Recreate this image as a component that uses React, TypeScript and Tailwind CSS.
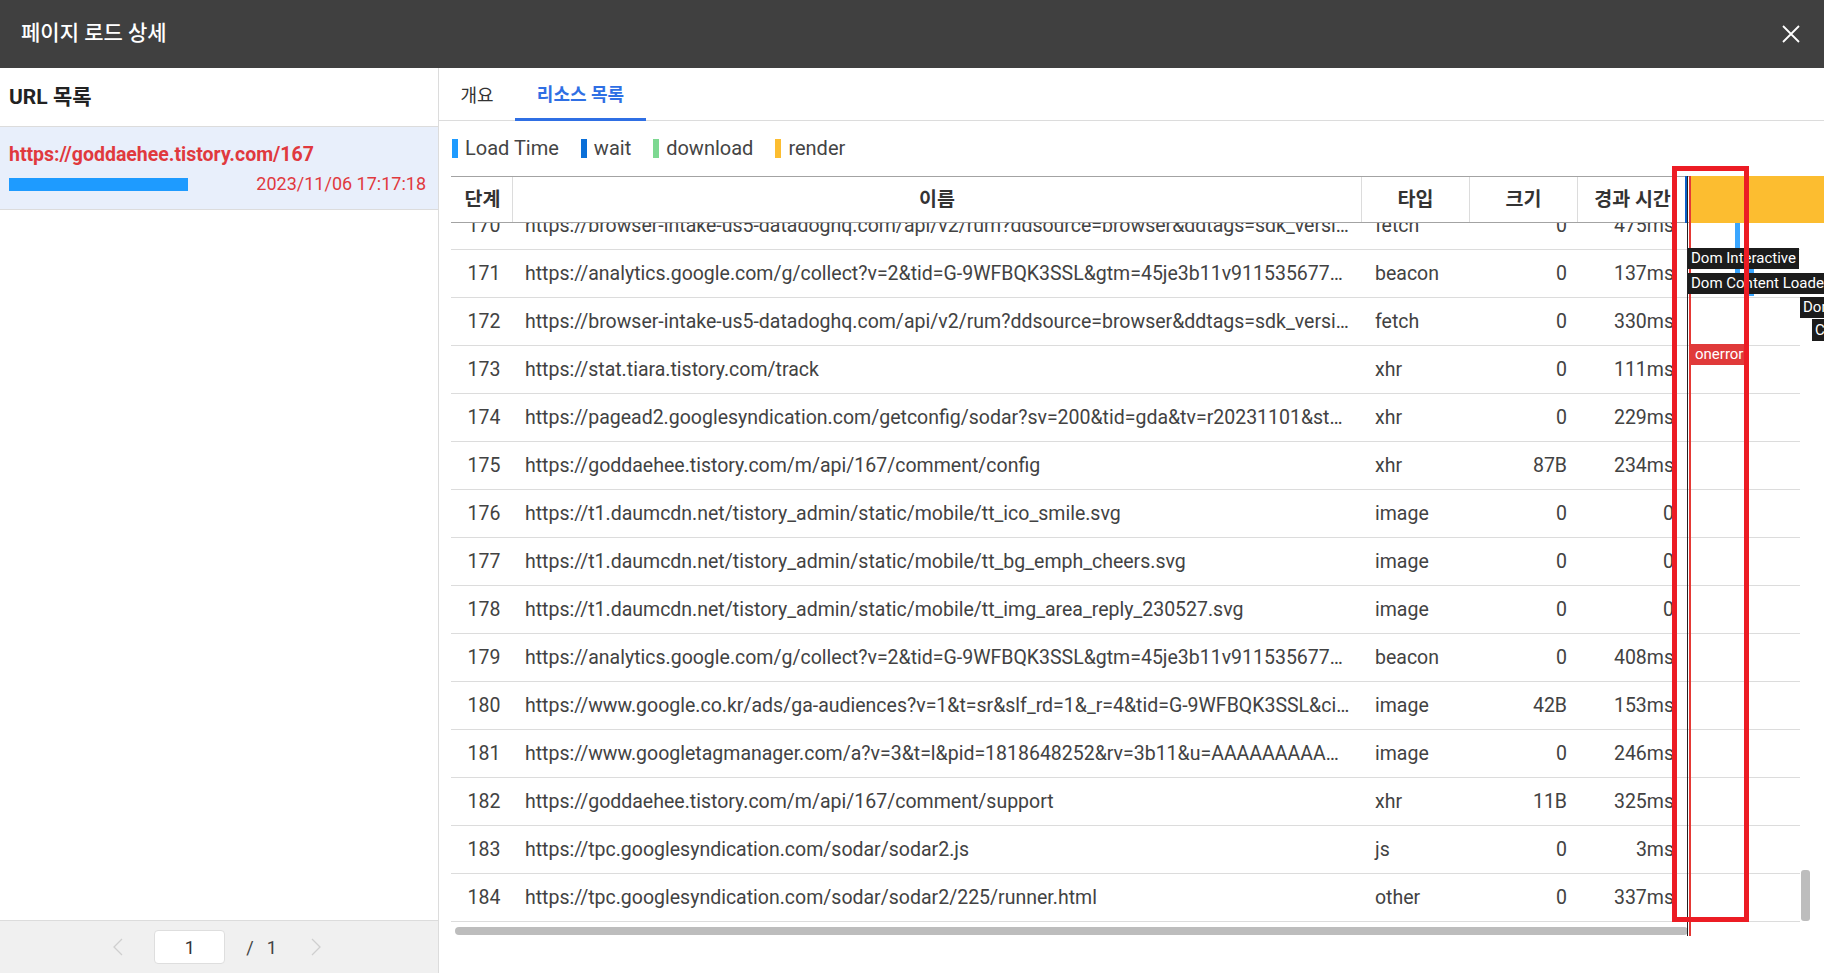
import React from "react";

const rows: [string, string, string, string, string][] = [
  ["170", "https://browser-intake-us5-datadoghq.com/api/v2/rum?ddsource=browser&ddtags=sdk_versi…", "fetch", "0", "475ms"],
  ["171", "https://analytics.google.com/g/collect?v=2&tid=G-9WFBQK3SSL&gtm=45je3b11v911535677…", "beacon", "0", "137ms"],
  ["172", "https://browser-intake-us5-datadoghq.com/api/v2/rum?ddsource=browser&ddtags=sdk_versi…", "fetch", "0", "330ms"],
  ["173", "https://stat.tiara.tistory.com/track", "xhr", "0", "111ms"],
  ["174", "https://pagead2.googlesyndication.com/getconfig/sodar?sv=200&tid=gda&tv=r20231101&st…", "xhr", "0", "229ms"],
  ["175", "https://goddaehee.tistory.com/m/api/167/comment/config", "xhr", "87B", "234ms"],
  ["176", "https://t1.daumcdn.net/tistory_admin/static/mobile/tt_ico_smile.svg", "image", "0", "0"],
  ["177", "https://t1.daumcdn.net/tistory_admin/static/mobile/tt_bg_emph_cheers.svg", "image", "0", "0"],
  ["178", "https://t1.daumcdn.net/tistory_admin/static/mobile/tt_img_area_reply_230527.svg", "image", "0", "0"],
  ["179", "https://analytics.google.com/g/collect?v=2&tid=G-9WFBQK3SSL&gtm=45je3b11v911535677…", "beacon", "0", "408ms"],
  ["180", "https://www.google.co.kr/ads/ga-audiences?v=1&t=sr&slf_rd=1&_r=4&tid=G-9WFBQK3SSL&ci…", "image", "42B", "153ms"],
  ["181", "https://www.googletagmanager.com/a?v=3&t=l&pid=1818648252&rv=3b11&u=AAAAAAAAA…", "image", "0", "246ms"],
  ["182", "https://goddaehee.tistory.com/m/api/167/comment/support", "xhr", "11B", "325ms"],
  ["183", "https://tpc.googlesyndication.com/sodar/sodar2.js", "js", "0", "3ms"],
  ["184", "https://tpc.googlesyndication.com/sodar/sodar2/225/runner.html", "other", "0", "337ms"],
];

const legend = [
  { label: "Load Time", color: "bg-[#1e9bff]" },
  { label: "wait", color: "bg-[#0a6fd8]" },
  { label: "download", color: "bg-[#7dd891]" },
  { label: "render", color: "bg-[#fcbd30]" },
];

const cols = "grid grid-cols-[62px_849px_108px_108px_109px_113px]";

export default function App() {
  return (
    <div className="w-full h-[973px] overflow-hidden flex flex-col bg-white font-[Roboto,'Noto_Sans_CJK_KR',sans-serif] text-[#424242]">
      {/* Title bar */}
      <div className="h-[68px] shrink-0 bg-[#404040] flex items-center justify-between pl-[21px] pr-[24px]">
        <div className="text-white text-[21px] font-medium">페이지 로드 상세</div>
        <svg width="18" height="18" viewBox="0 0 18 18" className="text-white">
          <path d="M1 1L17 17M17 1L1 17" stroke="currentColor" strokeWidth="1.8" />
        </svg>
      </div>

      <div className="flex-1 flex min-h-0">
        {/* Left panel */}
        <aside className="w-[439px] shrink-0 border-r border-[#dcdcdc] flex flex-col">
          <div className="h-[59px] shrink-0 border-b border-[#dcdcdc] flex items-center pl-[9px] pt-[2px] text-[21px] font-bold text-[#222]">
            URL 목록
          </div>
          <div className="h-[83px] shrink-0 bg-[#e8effb] border-b border-[#dcdcdc] pl-[9px] pr-[12px] pt-[16px] flex flex-col">
            <div className="text-[19.5px] font-bold text-[#e0393e] leading-[24px]">https://goddaehee.tistory.com/167</div>
            <div className="mt-[6px] flex items-center justify-between">
              <div className="w-[179px] h-[13px] bg-[#1e9bff]" />
              <div className="text-[18px] text-[#e0393e] leading-[22px]">2023/11/06 17:17:18</div>
            </div>
          </div>
          <div className="flex-1" />
          <div className="h-[53px] shrink-0 border-t border-[#dcdcdc] bg-[#f0f0f0] flex items-center justify-center pr-[4px]">
            <svg width="12" height="20" viewBox="0 0 12 20" className="text-[#cfcfcf]">
              <path d="M10 2L2 10L10 18" fill="none" stroke="currentColor" strokeWidth="1.3" />
            </svg>
            <div className="ml-[30px] w-[71px] h-[34px] bg-white border border-[#dedede] rounded-[4px] flex items-center justify-center text-[18px] text-[#333]">
              1
            </div>
            <div className="ml-[21px] text-[18px] text-[#444] flex gap-[13px]">
              <span>/</span>
              <span>1</span>
            </div>
            <svg width="12" height="20" viewBox="0 0 12 20" className="ml-[33px] text-[#cfcfcf]">
              <path d="M2 2L10 10L2 18" fill="none" stroke="currentColor" strokeWidth="1.3" />
            </svg>
          </div>
        </aside>

        {/* Right panel */}
        <main className="flex-1 min-w-0 flex flex-col">
          <div className="h-[53px] shrink-0 border-b border-[#dcdcdc] flex items-stretch">
            <div className="w-[76px] pt-[3px] flex items-center justify-center text-[18px] text-[#333]">개요</div>
            <div className="w-[131px] pt-[3px] flex items-center justify-center text-[18px] font-bold text-[#2f6fe4] border-b-[3px] border-[#2f6fe4] mb-[-1px]">
              리소스 목록
            </div>
          </div>

          <div className="h-[54px] shrink-0 flex items-center pl-[13px] gap-[22px]">
            {legend.map((l) => (
              <div key={l.label} className="flex items-center gap-[7px]">
                <span className={`w-[6px] h-[19px] ${l.color}`} />
                <span className="text-[20px] text-[#444] leading-[24px]">{l.label}</span>
              </div>
            ))}
          </div>

          <div className="relative ml-[12px] mt-[1px] w-[1360px]">
            <div className="flex">
              <div className="w-[1349px]">
                {/* header */}
                <div className={`${cols} h-[47px] border-t border-b border-[#a3a3a3] text-[19.5px] font-bold text-[#333]`}>
                  <div className="border-r border-[#dcdcdc] flex items-center justify-center pl-[2px]">단계</div>
                  <div className="border-r border-[#dcdcdc] flex items-center justify-center">이름</div>
                  <div className="border-r border-[#dcdcdc] flex items-center justify-center">타입</div>
                  <div className="border-r border-[#dcdcdc] flex items-center justify-center">크기</div>
                  <div className="flex items-center justify-center">경과 시간</div>
                  <div />
                </div>
                {/* body */}
                <div className="h-[699px] overflow-hidden">
                  <div className="mt-[-21px]">
                    {rows.map((r) => (
                      <div key={r[0]} className={`${cols} h-[48px] border-b border-[#dcdcdc] text-[19.5px] leading-[47px]`}>
                        <div className="text-center pl-[4px]">{r[0]}</div>
                        <div className="px-[12px] truncate">{r[1]}</div>
                        <div className="pl-[13px]">{r[2]}</div>
                        <div className="pr-[11px] text-right">{r[3]}</div>
                        <div className="pr-[13px] text-right">{r[4]}</div>
                        <div />
                      </div>
                    ))}
                  </div>
                </div>
              </div>
              {/* vertical scrollbar */}
              <div className="w-[11px] pt-[47px] flex flex-col justify-end">
                <div className="ml-[1px] w-[9px] h-[51px] rounded-[3px] bg-[#bdbdbd] mb-[1px]" />
              </div>
            </div>
            {/* horizontal scrollbar */}
            <div className="mt-[5px] ml-[4px] w-[1233px] h-[8px] rounded-full bg-[#bdbdbd]" />

            {/* timeline chart overlay */}
            <div className="absolute left-[1239px] top-0 w-[140px] h-[47px] bg-[#fcbd30]" />
            <div className="absolute left-[1234px] top-0 w-[2px] h-[47px] bg-[#0a5fc8]" />
            <div className="absolute left-[1284px] top-[47px] w-[5px] h-[50px] bg-[#3aa6ff]" />
            <div className="absolute left-[1298px] top-[73px] w-[5px] h-[47px] bg-[#3aa6ff]" />
            <div className="absolute left-[1236px] top-0 w-[1px] h-[760px] bg-[#222]" />
            <div className="absolute left-[1238px] top-0 w-[2px] h-[760px] bg-[#e53935]" />
            <div className="absolute left-[1237px] top-[72px] h-[21px] px-[3px] bg-[#1c1c1c] text-white text-[15px] leading-[21px] whitespace-nowrap">
              Dom Interactive
            </div>
            <div className="absolute left-[1237px] top-[97px] h-[21px] px-[3px] bg-[#1c1c1c] text-white text-[15px] leading-[21px] whitespace-nowrap">
              Dom Content Loaded
            </div>
            <div className="absolute left-[1349px] top-[121px] h-[21px] px-[3px] bg-[#1c1c1c] text-white text-[15px] leading-[21px] whitespace-nowrap">
              Dom Complete
            </div>
            <div className="absolute left-[1361px] top-[143px] h-[22px] px-[3px] bg-[#1c1c1c] text-white text-[15px] leading-[22px] whitespace-nowrap">
              Complete
            </div>
            <div className="absolute left-[1240px] top-[168px] h-[21px] px-[4px] bg-[#e03a3a] text-white text-[15px] leading-[21px] whitespace-nowrap">
              onerror
            </div>
            {/* red annotation box */}
            <div className="absolute left-[1221px] top-[-10px] w-[77px] h-[756px] border-[5px] border-[#ec1c24]" />
          </div>
        </main>
      </div>
    </div>
  );
}
